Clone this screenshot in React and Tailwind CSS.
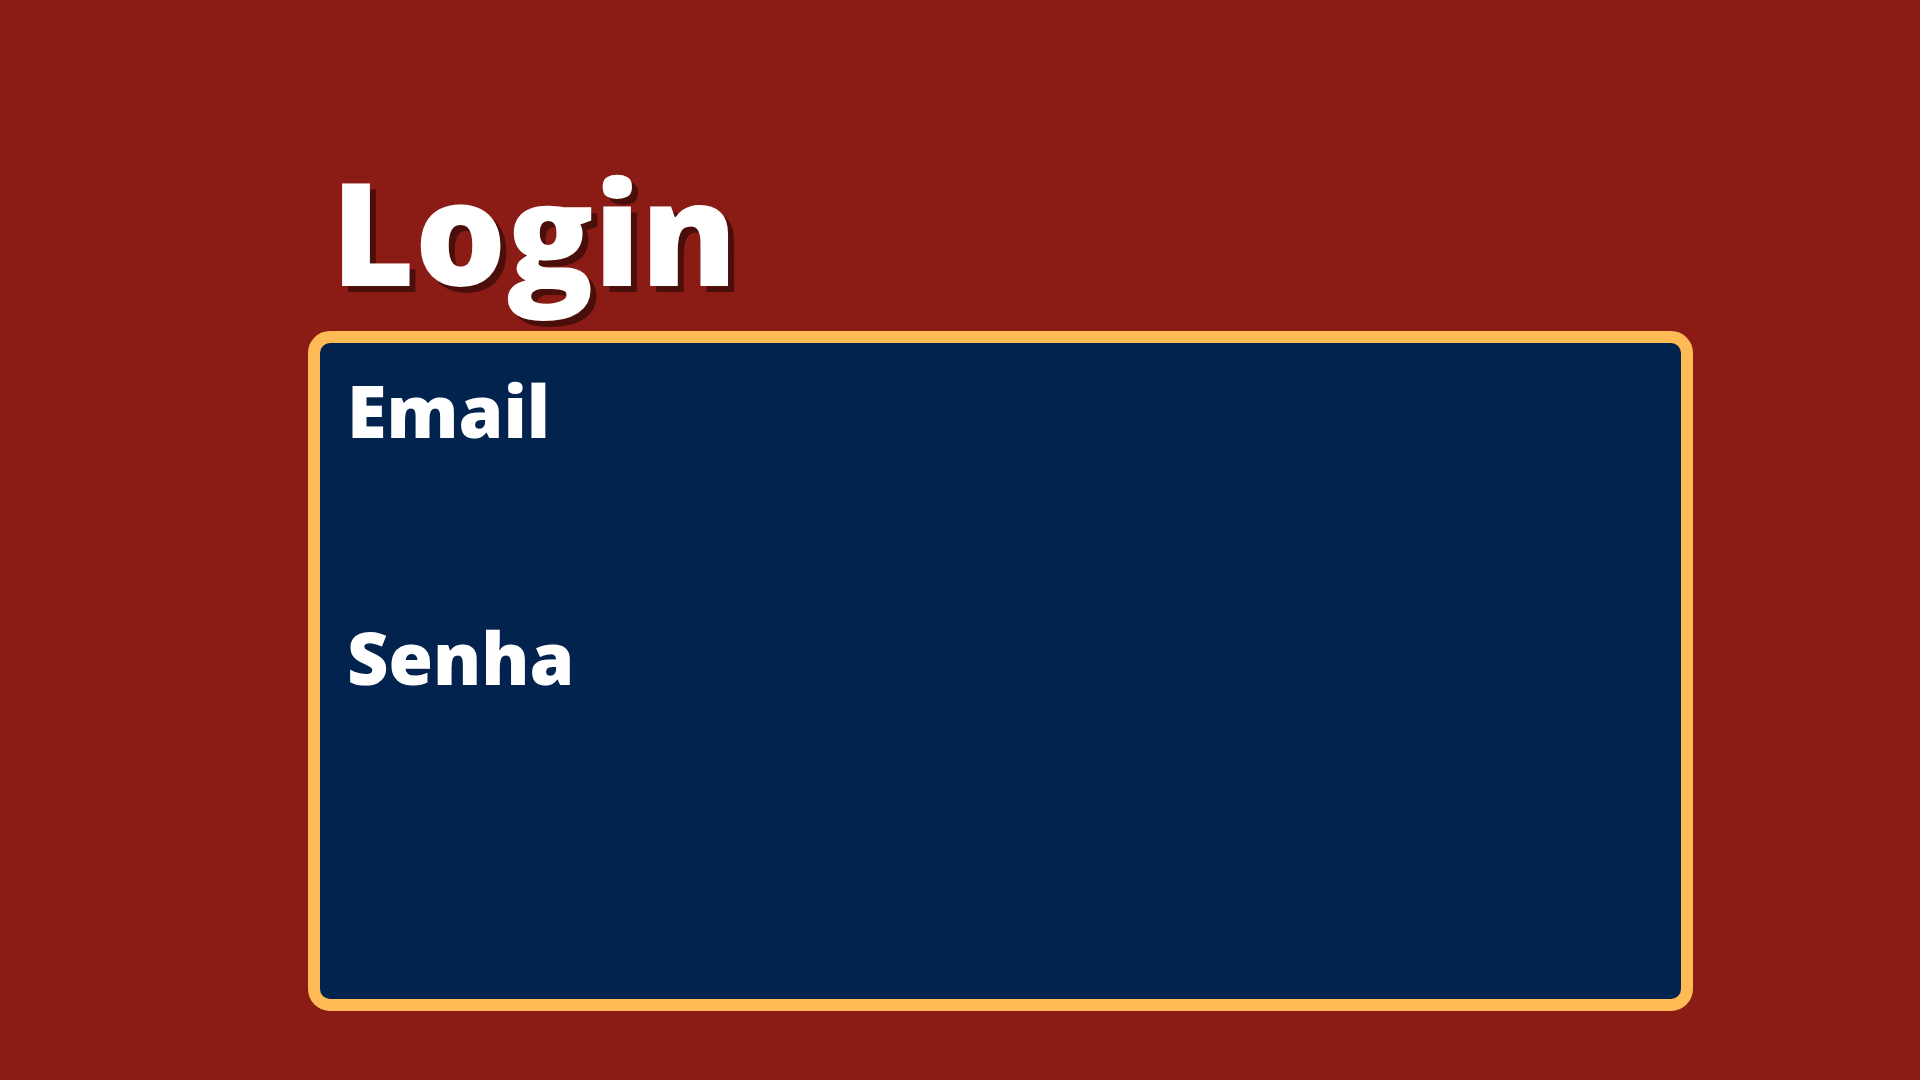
export default function App() {
  return (
    <div
      className="min-h-screen w-full bg-[#8a1c15] pt-[158px] pl-[308px]"
      style={{ fontFamily: '"Open Sans", "Noto Sans", sans-serif' }}
    >
      <h1 className="ml-[23px] text-[144px] leading-none font-extrabold text-white [text-shadow:6px_6px_0_#4a0f0b]">
        Login
      </h1>

      <form className="mt-[29px] w-[1385px] h-[680px] rounded-[22px] border-[12px] border-[#fdba55] bg-[#03234f] pt-[31px] pl-[27px]">
        <label className="block text-[72px] leading-none font-extrabold text-white">Email</label>
        <label className="block mt-[175px] text-[72px] leading-none font-extrabold text-white">Senha</label>
      </form>
    </div>
  );
}
